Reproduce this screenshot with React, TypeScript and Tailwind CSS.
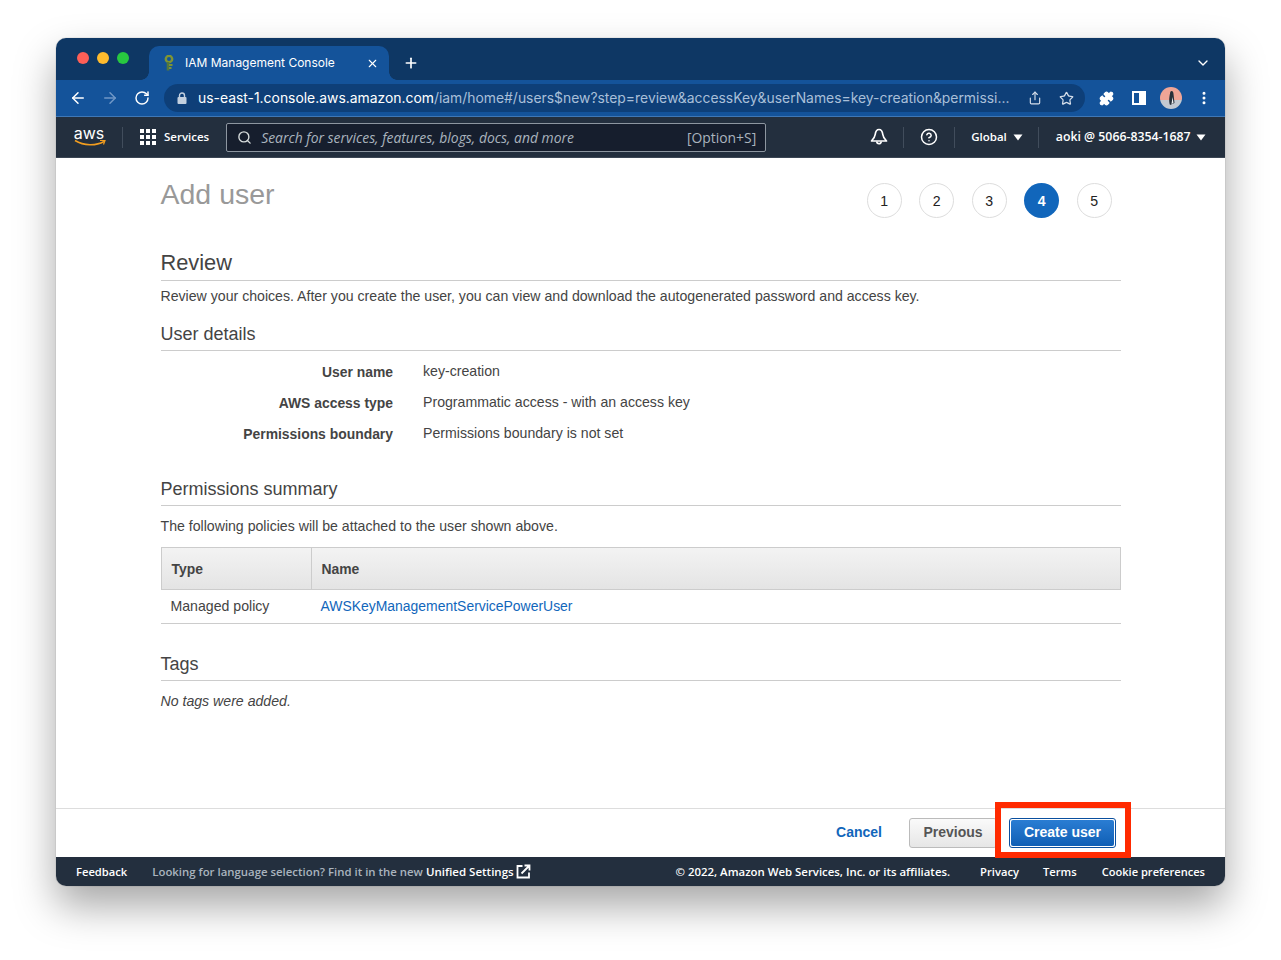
import React from 'react';
import { ArrowLeft, ArrowRight, ChevronDown, CircleHelp, MoreVertical, Plus, Puzzle, RotateCw, Search, Share, Star, X } from 'lucide-react';

const steps = [1, 2, 3, 4, 5];

const details = [
  { label: 'User name', value: 'key-creation' },
  { label: 'AWS access type', value: 'Programmatic access - with an access key' },
  { label: 'Permissions boundary', value: 'Permissions boundary is not set' },
];

const Caret = () => (
  <svg width="10" height="7" viewBox="0 0 10 7" className="shrink-0">
    <path d="M0.5 0.5h9L5 6.5z" fill="#fff" />
  </svg>
);

const Heading: React.FC<{ children: React.ReactNode }> = ({ children }) => (
  <h2 className="border-b border-[#ccc] text-[18px] leading-[24px] pb-[4px] text-[#444]">{children}</h2>
);

const Browser = () => (
  <>
    <div className="h-[42px] bg-[#0e3764] flex items-end relative shrink-0">
      <div className="flex gap-[8px] ml-[21px] mb-[16px] mr-[20px]">
        <span className="w-3 h-3 rounded-full bg-[#fd5f57]" />
        <span className="w-3 h-3 rounded-full bg-[#febb2e]" />
        <span className="w-3 h-3 rounded-full bg-[#28c840]" />
      </div>
      <div className="w-[240px] h-[34px] bg-[#14539a] rounded-t-[10px] flex items-center pl-[15px] pr-[10px] text-white font-['Inter',sans-serif] text-[12px] relative">
        <span className="absolute -left-[8px] bottom-0 w-[8px] h-[8px] bg-[radial-gradient(circle_at_0_0,#0e3764_7.5px,#14539a_8px)]" />
        <span className="absolute -right-[8px] bottom-0 w-[8px] h-[8px] bg-[radial-gradient(circle_at_100%_0,#0e3764_7.5px,#14539a_8px)]" />
        <svg width="11" height="16" viewBox="0 0 11 16" className="mr-[10px] shrink-0">
          <circle cx="5" cy="4" r="3.2" fill="none" stroke="#7f9433" strokeWidth="2.4" />
          <path d="M4 7v8.500" stroke="#52773f" strokeWidth="2.600" fill="none" />
          <path d="M5 10h3.500M5 13h2.500" stroke="#7f9433" strokeWidth="2" fill="none" />
        </svg>
        <span className="flex-1">IAM Management Console</span>
        <X size={13} strokeWidth={2} />
      </div>
      <Plus size={16} strokeWidth={2.5} className="text-white ml-[14px] mb-[9px]" />
      <ChevronDown size={16} strokeWidth={2} className="text-white ml-auto mr-[14px] mb-[9px]" />
    </div>
    <div className="h-[37px] bg-[#14539a] border-b border-[#3f77b5] flex items-center shrink-0">
      <ArrowLeft size={18} strokeWidth={2} className="text-white ml-[13px]" />
      <ArrowRight size={18} strokeWidth={2} className="text-[#6f97c6] ml-[14px]" />
      <RotateCw size={16} strokeWidth={2.2} className="text-white ml-[15px]" />
      <div className="ml-[14px] w-[921px] h-[28px] rounded-full bg-[#0e3f78] flex items-center pl-[13px] pr-[10px] font-['Inter',sans-serif] text-[13.9px] whitespace-nowrap">
        <svg width="10" height="12" viewBox="0 0 10 12" className="mr-[11px] shrink-0">
          <path d="M2.500 5V3.500a2.500 2.500 0 0 1 5 0V5" fill="none" stroke="#c3d0df" strokeWidth="1.400" />
          <rect x="0.500" y="5" width="9" height="7" rx="1" fill="#c3d0df" />
        </svg>
        <span className="text-white">us-east-1.console.aws.amazon.com</span>
        <span className="text-[#a9bfd9] mr-auto">/iam/home#/users$new?step=review&amp;accessKey&amp;userNames=key-creation&amp;permissi...</span>
        <Share size={14} className="text-[#d5deea] shrink-0 -translate-x-[1px]" />
        <Star size={15} className="text-[#d5deea] ml-[17px] shrink-0 -translate-x-[1px]" />
      </div>
      <Puzzle size={15} fill="#fff" className="text-white ml-[14px]" />
      <span className="w-[14px] h-[14px] border-[2px] border-white ml-[18px] flex justify-end">
        <span className="w-[5px] h-full bg-white" />
      </span>
      <span className="w-[22px] h-[22px] rounded-full ml-[14px] overflow-hidden bg-gradient-to-b from-[#f0a596] from-60% to-[#c3c9d1] to-60% flex items-center justify-center">
        <svg width="8" height="14" viewBox="0 0 8 14">
          <path d="M4.5 0C6 0 6.5 1.500 6.5 3L7.500 12L3 14C1.500 10 2.500 5 3 2.500C3.200 1 3.500 0 4.500 0z" fill="#27303a" />
          <path d="M5.500 6L6.500 12L4.500 13z" fill="#f3f3f3" />
        </svg>
      </span>
      <MoreVertical size={16} strokeWidth={2.5} className="text-white ml-[14px]" />
    </div>
  </>
);

const AwsNav = () => (
  <div className="h-[41px] bg-[#232f3e] flex items-center shrink-0 border-b border-[#3b4654] text-white font-['Open_Sans',sans-serif] text-[11.5px] font-semibold">
    <div className="w-[66px] flex flex-col items-center relative">
      <span className="font-['Inter',sans-serif] text-[16px] leading-[15px] font-normal -mt-[7px]">aws</span>
      <svg width="32" height="8" viewBox="0 0 32 8" className="absolute top-[6px] left-[18px]">
        <path d="M1 1.500C10 7 22 7 30 2.500" fill="none" stroke="#f29d1f" strokeWidth="1.500" />
        <path d="M26 1.500L31 1.500L29.500 5.500" fill="none" stroke="#f29d1f" strokeWidth="1.200" />
      </svg>
    </div>
    <span className="w-px h-[21px] bg-[#414d5c]" />
    <div className="w-[16px] h-[16px] grid grid-cols-3 gap-[2px] ml-[17px] mr-[8px]">
      {Array.from({ length: 9 }).map((_, i) => (
        <span key={i} className="bg-white" />
      ))}
    </div>
    <span>Services</span>
    <div className="ml-[17px] w-[540px] h-[29px] pt-[2px] bg-[#161e2d] border border-[#8d96a0] rounded-[2px] flex items-center pl-[10px] pr-[9px] font-normal text-[13.9px] text-[#aab4be]">
      <Search size={15} strokeWidth={2.2} className="text-[#d5dbdb] mr-[9px] shrink-0 -mt-[2px]" />
      <span className="italic flex-1">Search for services, features, blogs, docs, and more</span>
      <span>[Option+S]</span>
    </div>
    <svg width="18" height="18" viewBox="0 0 18 18" fill="none" stroke="#fff" strokeWidth="1.700" className="ml-[104px] shrink-0">
      <path d="M9 1.500C6.200 1.500 5.500 4 5.200 6.500C4.900 9 3.500 11 1.500 13H16.500C14.500 11 13.100 9 12.800 6.500C12.500 4 11.800 1.500 9 1.500Z" strokeLinejoin="round" />
      <path d="M6.800 13.500a2.200 2.200 0 0 0 4.400 0" />
    </svg>
    <span className="w-px h-[21px] bg-[#414d5c] ml-[15px]" />
    <CircleHelp size={18} strokeWidth={2} className="ml-[16px]" />
    <span className="w-px h-[21px] bg-[#414d5c] ml-[16px]" />
    <span className="ml-[16px] mr-[6px]">Global</span>
    <Caret />
    <span className="w-px h-[21px] bg-[#414d5c] ml-[15px]" />
    <span className="ml-[17px] mr-[5px] text-[12.3px] whitespace-nowrap">aoki @ 5066-8354-1687</span>
    <Caret />
  </div>
);

const Review = () => (
  <div className="flex-1 pl-[104.5px] pr-[104px] font-['Liberation_Sans',sans-serif] text-[14.13px] text-[#444]">
    <div className="flex justify-between h-[79px]">
      <h1 className="text-[28.5px] leading-[32px] pt-[20px] text-[#999]">Add user</h1>
      <div className="flex gap-[17.5px] pt-[25px] pr-[9.25px]">
        {steps.map((s) => (
          <span
            key={s}
            className={
              s === 4
                ? 'w-[35px] h-[35px] pt-[2px] rounded-full bg-[#1166bb] text-white font-bold flex items-center justify-center'
                : 'w-[35px] h-[35px] pt-[2px] rounded-full border border-[#ddd] text-[#222] flex items-center justify-center'
            }
          >
            {s}
          </span>
        ))}
      </div>
    </div>

    <h2 className="border-b border-[#ccc] text-[21.800px] leading-[26px] pt-[13px] pb-[4px] text-[#444]">Review</h2>
    <p className="leading-[20px] mt-[5px]">
      Review your choices. After you create the user, you can view and download the autogenerated password and access key.
    </p>

    <div className="mt-[16px]">
      <Heading>User details</Heading>
      <div className="mt-[6px]">
        {details.map((d) => (
          <div key={d.label} className="flex h-[31px] items-center">
            <span className="w-[232.500px] text-right font-bold text-[13.9px]">{d.label}</span>
            <span className="ml-[30px] -mt-[2px]">{d.value}</span>
          </div>
        ))}
      </div>
    </div>

    <div className="mt-[27px]">
      <Heading>Permissions summary</Heading>
      <p className="leading-[20px] mt-[10px]">The following policies will be attached to the user shown above.</p>
      <div className="mt-[11px] border-b border-[#ccc]">
        <div className="flex h-[43px] border border-[#ccc] bg-gradient-to-b from-[#f3f3f3] to-[#e4e4e4] font-bold text-[13.9px]">
          <span className="w-[150px] flex items-center pl-[10px] pt-[2px] border-r border-[#ccc]">Type</span>
          <span className="flex items-center pl-[10px] pt-[2px]">Name</span>
        </div>
        <div className="flex h-[33px] items-center">
          <span className="w-[160px] pl-[10px]">Managed policy</span>
          <a href="#" className="text-[#1166bb] text-[13.95px]">AWSKeyManagementServicePowerUser</a>
        </div>
      </div>
    </div>

    <div className="mt-[28px]">
      <Heading>Tags</Heading>
      <p className="leading-[20px] mt-[10px] italic">No tags were added.</p>
    </div>
  </div>
);

const ActionBar = () => (
  <div className="h-[49px] border-t border-[#ddd] flex items-center justify-end pr-[109px] shrink-0 font-['Liberation_Sans',sans-serif] font-bold text-[14px] relative">
    <a href="#" className="text-[#1166bb] mb-[2px]">Cancel</a>
    <button className="ml-[27px] w-[88px] h-[30px] pb-[2px] rounded-[3px] border border-[#bbb] bg-gradient-to-b from-[#fafafa] to-[#e6e6e6] text-[#555]">
      Previous
    </button>
    <button className="ml-[12px] w-[107px] h-[30px] rounded-[3px] border border-[#0a4f9e] p-px text-white">
      <span className="w-full h-full pb-[2px] flex items-center justify-center rounded-[2px] bg-gradient-to-b from-[#2a7dd3] to-[#0f5fb5]">Create user</span>
    </button>
    <span className="absolute right-[94px] top-[-7px] w-[136px] h-[56px] border-[6px] border-[#ff2a00]" />
  </div>
);

const Footer = () => (
  <div className="h-[29px] bg-[#232f3e] flex items-center shrink-0 pl-[20px] pr-[20px] font-['Open_Sans',sans-serif] text-[11.2px] font-semibold text-white whitespace-nowrap">
    <span className="mt-[2px]">Feedback</span>
    <span className="ml-[25px] text-[#aab4be] text-[11.4px]">Looking for language selection? Find it in the new</span>
    <span className="ml-[3px] text-[11.5px]">Unified Settings</span>
    <svg width="15" height="15" viewBox="0 0 15 15" className="ml-[2px]" fill="none" stroke="#fff" strokeWidth="1.800">
      <path d="M6.500 2H1.500V13.500H13V8.500" />
      <path d="M5.500 9.500L13 2M8.500 1.500H13.500V6.500" />
    </svg>
    <span className="ml-auto text-[11.4px]">© 2022, Amazon Web Services, Inc. or its affiliates.</span>
    <span className="ml-[30px] mt-[2px]">Privacy</span>
    <span className="ml-[24px] mt-[2px]">Terms</span>
    <span className="ml-[25px] mt-[2px] text-[11.1px]">Cookie preferences</span>
  </div>
);

export default function App() {
  return (
    <div className="h-[960px] bg-white pt-[38px] pl-[56px]">
      <div className="w-[1169px] h-[848px] rounded-[10px] overflow-hidden flex flex-col bg-white shadow-[0_0_1px_rgba(0,0,0,0.5),0_20px_40px_rgba(0,0,0,0.35)]">
        <Browser />
        <AwsNav />
        <Review />
        <ActionBar />
        <Footer />
      </div>
    </div>
  );
}
